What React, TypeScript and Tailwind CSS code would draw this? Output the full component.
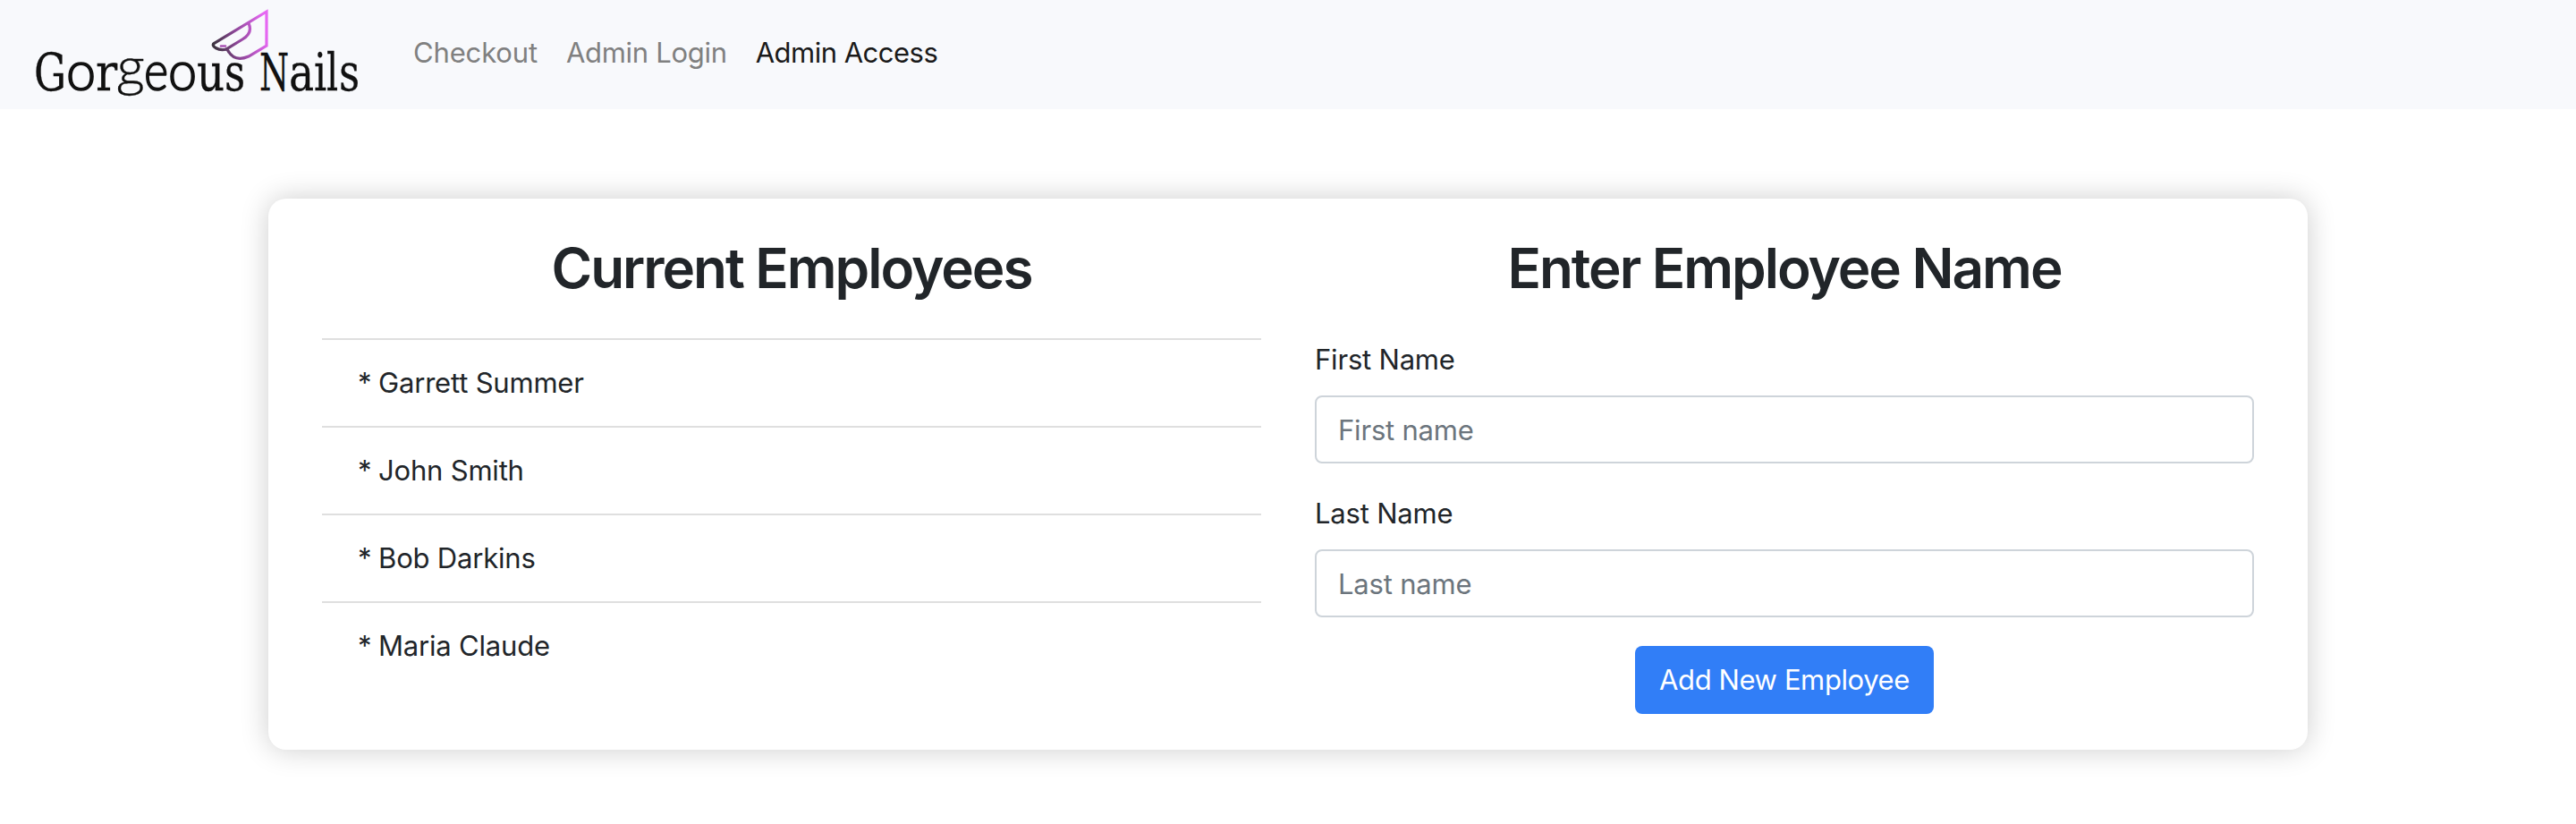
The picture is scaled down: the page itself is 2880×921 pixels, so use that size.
import React from "react";

const employees = ["Garrett Summer", "John Smith", "Bob Darkins", "Maria Claude"];

type Glyph = { ch: string; x: number; w: number; round?: boolean };

const gor: Glyph[] = [
  { ch: "G", x: 38, w: 36 },
  { ch: "o", x: 74, w: 33, round: true },
  { ch: "r", x: 107, w: 24 },
];
const eous: Glyph[] = [
  { ch: "e", x: 161, w: 27, round: true },
  { ch: "o", x: 188, w: 32, round: true },
  { ch: "u", x: 220, w: 31 },
  { ch: "s", x: 251, w: 23 },
];
const nails: Glyph[] = [
  { ch: "N", x: 290, w: 33 },
  { ch: "a", x: 323, w: 28 },
  { ch: "i", x: 351, w: 14 },
  { ch: "l", x: 365, w: 13 },
  { ch: "s", x: 379, w: 23 },
];

function renderGlyph(g: Glyph) {
  return (
    <tspan
      key={g.x}
      x={g.x}
      y={101}
      textLength={g.w}
      lengthAdjust="spacingAndGlyphs"
      fontFamily={g.round ? "Lato" : "DejaVu Serif"}
      fontWeight={g.round ? 300 : 400}
      fontSize={g.round ? 62 : 58}
      strokeWidth={g.round ? 1.6 : 0.3}
    >
      {g.ch}
    </tspan>
  );
}

function Logo() {
  return (
    <svg className="block h-[122px] w-[420px] shrink-0" viewBox="0 0 420 122" role="img" aria-label="Gorgeous Nails">
      <defs>
        <linearGradient id="nail" gradientUnits="userSpaceOnUse" x1="238" y1="50" x2="298" y2="38">
          <stop offset="0" stopColor="#3b333d" />
          <stop offset="0.45" stopColor="#8d4698" />
          <stop offset="1" stopColor="#e667f2" />
        </linearGradient>
      </defs>
      <g fill="#111111" stroke="#111111">
        <text>
          {gor.map(renderGlyph)}
          <tspan x="131" y="94" textLength="30" lengthAdjust="spacingAndGlyphs" fontFamily="Open Sans" fontWeight="300" fontSize="54" strokeWidth="0.3">g</tspan>
          {eous.map(renderGlyph)}
        </text>
        <text>{nails.map(renderGlyph)}</text>
      </g>
      <g fill="none" stroke="url(#nail)" strokeWidth="3.2" strokeLinecap="round">
        <path d="M253 55 Q247 57 241 53.500 Q236 50 240 48 L298 13 V51 L278 63 Q262 70 254.500 56" />
        <path d="M253 55 L271 44 Q283 37 278 26" />
        <path d="M247 51.500 H252" strokeWidth="2.600" stroke="#a851b3" />
      </g>
    </svg>
  );
}

function Field({ label, placeholder }: { label: string; placeholder: string }) {
  return (
    <div className="mb-8">
      <label className="mb-4 block">{label}</label>
      <input
        placeholder={placeholder}
        className="block h-[76px] w-full rounded-lg border-2 border-[#ced4da] bg-white px-6 placeholder:text-[#6c757d] placeholder:opacity-100"
      />
    </div>
  );
}

export default function App() {
  return (
    <div className="h-[921px] overflow-hidden bg-white font-['Inter',sans-serif] text-[31px] leading-[48px] tracking-[-0.2px] text-[#212529]">
      <nav className="flex h-[122px] items-center bg-[#f8f9fc]">
        <Logo />
        <div className="flex gap-8 pb-1 pl-[42px] text-[#808080]">
          <a className="tracking-[-0.15px]">Checkout</a>
          <a className="tracking-[-0.3px]">Admin Login</a>
          <a className="tracking-[-0.5px] text-[#1a1a1a]">Admin Access</a>
        </div>
      </nav>
      <main className="mx-auto mt-[100px] grid h-[616px] w-[2280px] grid-cols-2 gap-[60px] rounded-[20px] bg-white px-[60px] pt-10 shadow-[0_0_32px_rgba(0,0,0,0.2)]">
        <section>
          <h1 className="mb-10 text-center text-[62px] leading-[76px] font-semibold tracking-[-2.05px]">Current Employees</h1>
          <ul>
            {employees.map((name) => (
              <li key={name} className="border-t-2 border-[#dfdfdf] px-10 py-6">
                <span className="tracking-[-0.6px]">* </span>
                {name}
              </li>
            ))}
          </ul>
        </section>
        <section>
          <h1 className="mb-10 text-center text-[62px] leading-[76px] font-semibold tracking-[-2.05px]">Enter Employee Name</h1>
          <Field label="First Name" placeholder="First name" />
          <Field label="Last Name" placeholder="Last name" />
          <button className="mx-auto block h-[76px] w-[334px] rounded-lg bg-[#317ef7] tracking-[-0.4px] whitespace-nowrap text-white">Add New Employee</button>
        </section>
      </main>
    </div>
  );
}
